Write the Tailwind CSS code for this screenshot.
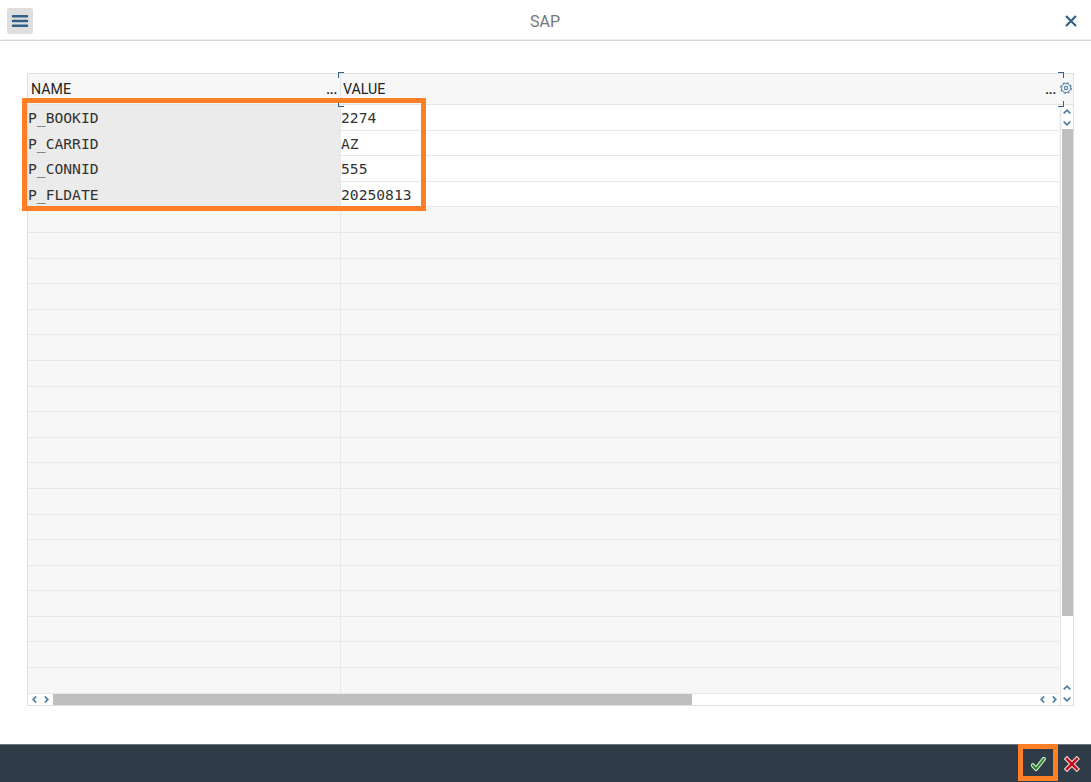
<!DOCTYPE html>
<html lang="en">
<head>
<meta charset="utf-8">
<title>SAP</title>
<script src="https://cdn.jsdelivr.net/npm/@tailwindcss/browser@4"></script>
</head>
<body class="relative flex h-[782px] w-[1091px] flex-col overflow-hidden bg-white font-['Roboto','Liberation_Sans',sans-serif] text-[#222]">
  <header class="flex h-[41px] shrink-0 items-center justify-between border-b border-[#d6d7da] pr-[14px] pl-[7px] shadow-[0_-1px_0_#efeff2_inset]">
    <button class="mt-px flex h-[26px] w-[26px] items-center justify-center rounded-[2px] bg-[#dedede]">
      <svg class="h-4 w-[18px]" viewBox="0 0 18 16" stroke="#346187" stroke-width="2.5" stroke-linecap="round"><path d="M2 3.2H16M2 8H16M2 12.8H16"/></svg>
    </button>
    <h1 class="mt-[3px] ml-[-8px] text-[16px] leading-[24px] text-[#74777a]">SAP</h1>
    <svg class="mt-px h-3 w-3" viewBox="0 0 12 12" fill="none" stroke="#346187" stroke-width="2.2"><path d="M1 1L11 11M11 1L1 11"/></svg>
  </header>

  <main class="flex-1 pt-[32px] pl-[27px]">
    <div class="relative flex h-[633px] w-[1047px] flex-col border border-[#dfdfdf] bg-white">
      <div class="flex h-[31px] shrink-0 border-b border-[#e4e4e4] bg-[#f7f7f7] text-[14.2px] leading-[31px]">
        <div class="flex w-[313px] justify-between border-r border-[#e4e4e4] pr-[3px] pl-[3px]"><span>NAME</span><span class="text-[13px] font-bold tracking-[-0.2px]">...</span></div>
        <div class="flex w-[717px] justify-between pr-[2px] pl-[2px]"><span>VALUE</span><span class="text-[13px] font-bold tracking-[-0.2px]">...</span></div>
        <svg class="mt-[8px] ml-[2px] h-[13px] w-[13px] shrink-0" viewBox="0 0 13 13" fill="none" stroke="#5d86aa"><circle cx="6" cy="6" r="4.5" stroke-width="1"/><circle cx="6" cy="6" r="5.3" stroke-width="1.2" stroke-dasharray="2.3 1.86"/><circle cx="6" cy="6" r="1.7" stroke-width="1.2"/></svg>
      </div>
      <div class="flex h-[589px] shrink-0">
        <div class="w-[1032px] bg-[#f7f7f7] pr-px font-['DejaVu_Sans_Mono',monospace] text-[14.65px] leading-[26px] text-[#333]">
          <div id="rows"></div>
        </div>
        <div class="flex w-[13px] flex-col border-l border-[#e4e4e4]">
          <div class="flex h-[24px] shrink-0 flex-col items-center justify-between pt-[4px] pb-[3px]">
            <svg class="h-[5px] w-2" viewBox="0 0 8 5" fill="none" stroke="#4c7ba3" stroke-width="1.7"><path d="M.7 4.3L4 1.2L7.3 4.3"/></svg>
            <svg class="h-[5px] w-2" viewBox="0 0 8 5" fill="none" stroke="#4c7ba3" stroke-width="1.7"><path d="M.7 .7L4 3.8L7.3 .7"/></svg>
          </div>
          <div class="ml-px h-[487px] bg-[#bfbfbf]"></div>
          <div class="flex flex-1 items-end justify-center pb-[4px]"><svg class="h-[5px] w-2" viewBox="0 0 8 5" fill="none" stroke="#4c7ba3" stroke-width="1.7"><path d="M.7 4.3L4 1.2L7.3 4.3"/></svg></div>
        </div>
      </div>
      <div class="flex flex-1">
        <div class="flex w-[25px] items-center justify-between pr-[4px] pl-[4px]">
          <svg class="h-[7px] w-[5px]" viewBox="0 0 5 7" fill="none" stroke="#4c7ba3" stroke-width="1.7"><path d="M4.2 .5L1.2 3.5L4.2 6.5"/></svg>
          <svg class="h-[7px] w-[5px]" viewBox="0 0 5 7" fill="none" stroke="#4c7ba3" stroke-width="1.7"><path d="M.8 .5L3.8 3.5L.8 6.5"/></svg>
        </div>
        <div class="w-[639px] bg-[#bfbfbf]"></div>
        <div class="flex w-[368px] items-center justify-end gap-[7px] pr-[3px]">
          <svg class="h-[7px] w-[5px]" viewBox="0 0 5 7" fill="none" stroke="#4c7ba3" stroke-width="1.7"><path d="M4.2 .5L1.2 3.5L4.2 6.5"/></svg>
          <svg class="h-[7px] w-[5px]" viewBox="0 0 5 7" fill="none" stroke="#4c7ba3" stroke-width="1.7"><path d="M.8 .5L3.8 3.5L.8 6.5"/></svg>
        </div>
        <div class="flex w-[13px] items-center justify-center border-l border-[#e4e4e4]"><svg class="h-[5px] w-2" viewBox="0 0 8 5" fill="none" stroke="#4c7ba3" stroke-width="1.7"><path d="M.7 .7L4 3.8L7.3 .7"/></svg></div>
      </div>
      <!-- focus corners of the VALUE column header -->
      <div class="absolute -top-[2px] left-[310px] h-[6px] w-[6px] border-t border-l border-[#346187]"></div>
      <div class="absolute top-[27px] left-[310px] h-[6px] w-[6px] border-b border-l border-[#346187]"></div>
      <div class="absolute -top-[2px] left-[1030px] h-[6px] w-[6px] border-t border-r border-[#346187]"></div>
      <div class="absolute top-[27px] left-[1030px] h-[6px] w-[6px] border-r border-b border-[#346187]"></div>
    </div>
  </main>

  <footer class="flex h-[38px] shrink-0 items-center justify-end gap-[17px] border-t border-[#6d757c] bg-[#2f3c48] pr-[11px]">
    <svg class="mt-px h-4 w-4" viewBox="0 0 16 16" fill="none" stroke-linecap="round" stroke-linejoin="round"><path d="M1.8 9.3L5 13L12.8 3" stroke="#d5e4d2" stroke-width="4.2"/><path d="M1.8 9.3L5 13L12.8 3" stroke="#278a28" stroke-width="2"/></svg>
    <svg class="mt-px h-4 w-4" viewBox="0 0 16 16" fill="none" stroke-linecap="square"><path d="M3 3L12.8 13M12.8 3L3 13" stroke="#efdede" stroke-width="4.6"/><path d="M3 3L12.8 13M12.8 3L3 13" stroke="#c60d16" stroke-width="2.5"/></svg>
  </footer>

  <!-- highlight boxes -->
  <div class="absolute top-[98px] left-[22px] h-[113px] w-[404px] border-5 border-[#ff7f27]"></div>
  <div class="absolute top-[744px] left-[1018px] h-[37px] w-[40px] border-5 border-[#ff7f27]"></div>

  <script>
    const data = [['P_BOOKID', '2274'], ['P_CARRID', 'AZ'], ['P_CONNID', '555'], ['P_FLDATE', '20250813']];
    const rows = document.getElementById('rows');
    for (let i = 0; i < 23; i++) {
      const d = data[i];
      const row = document.createElement('div');
      row.className = 'flex h-[25.6px] border-b border-[#e8e8e8]' + (d ? ' bg-white' : '');
      row.innerHTML = '<div class="w-[313px] shrink-0 border-r border-[#e8e8e8]' + (d ? ' bg-[#ebebeb]' : '') + '">' + (d ? d[0] : '') + '</div><div>' + (d ? d[1] : '') + '</div>';
      rows.appendChild(row);
    }
  </script>
</body>
</html>
